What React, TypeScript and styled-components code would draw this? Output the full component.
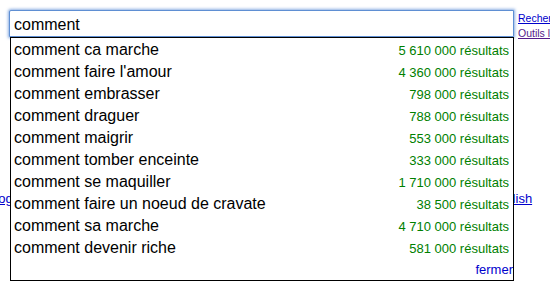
import styled, { createGlobalStyle } from 'styled-components';

const GlobalStyle = createGlobalStyle`
  html, body {
    margin: 0;
    padding: 0;
    background: #ffffff;
    overflow: hidden;
  }
  body {
    font-family: "Liberation Sans", Arial, sans-serif;
  }
`;

const suggestions = [
  { text: 'comment ca marche', count: '5 610 000 résultats' },
  { text: "comment faire l'amour", count: '4 360 000 résultats' },
  { text: 'comment embrasser', count: '798 000 résultats' },
  { text: 'comment draguer', count: '788 000 résultats' },
  { text: 'comment maigrir', count: '553 000 résultats' },
  { text: 'comment tomber enceinte', count: '333 000 résultats' },
  { text: 'comment se maquiller', count: '1 710 000 résultats' },
  { text: 'comment faire un noeud de cravate', count: '38 500 résultats' },
  { text: 'comment sa marche', count: '4 710 000 résultats' },
  { text: 'comment devenir riche', count: '581 000 résultats' },
];

export default function App() {
  return (
    <Page>
      <GlobalStyle />
      <TopBar>
        <SearchColumn>
          <SearchInput>comment</SearchInput>
          <Dropdown>
            {suggestions.map((s) => (
              <Row key={s.text}>
                <Query>{s.text}</Query>
                <Count>{s.count}</Count>
              </Row>
            ))}
            <Footer>
              <CloseLink>fermer</CloseLink>
            </Footer>
          </Dropdown>
        </SearchColumn>
        <SideLinks>
          <SmallLink>Recherche avancée</SmallLink>
          <SmallLink $visited>Outils linguistiques</SmallLink>
        </SideLinks>
      </TopBar>
      <LanguageRow>
        <LeftLink>Google.fr</LeftLink>
        <RightLink>English</RightLink>
      </LanguageRow>
    </Page>
  );
}

const Page = styled.div`
  width: 550px;
  height: 301px;
  padding: 10px 0 0 9px;
  box-sizing: border-box;
  overflow: hidden;
`;

const TopBar = styled.div`
  display: flex;
  align-items: flex-start;
`;

const SearchColumn = styled.div`
  position: relative;
  width: 505px;
  flex-shrink: 0;
  z-index: 2;
`;

const SearchInput = styled.div`
  box-sizing: border-box;
  height: 27px;
  border: 1px solid #5f8fd3;
  border-radius: 2px 0 0 0;
  box-shadow: 0 0 3px 1px rgba(90, 140, 215, 0.7);
  padding: 4px 0 0 4px;
  font-size: 16px;
  line-height: 20px;
  color: #000;
  background: #fff;
`;

const Dropdown = styled.div`
  position: absolute;
  top: 27px;
  left: 1px;
  width: 504px;
  box-sizing: border-box;
  border: 1px solid #000;
  padding-top: 1px;
  background: #fff;
  display: flex;
  flex-direction: column;
`;

const Row = styled.div`
  display: flex;
  justify-content: space-between;
  align-items: center;
  height: 22px;
  padding: 0 4px 0 3px;
`;

const Query = styled.span`
  font-size: 16px;
  color: #000;
  white-space: nowrap;
`;

const Count = styled.span`
  font-size: 13px;
  color: #008000;
  white-space: nowrap;
`;

const Footer = styled.div`
  display: flex;
  justify-content: flex-end;
  align-items: center;
  height: 21px;
`;

const CloseLink = styled.span`
  font-size: 13px;
  color: #0000cc;
`;

const SideLinks = styled.div`
  display: flex;
  flex-direction: column;
  gap: 3px;
  margin-left: 4px;
  margin-top: 2px;
  white-space: nowrap;
`;

const SmallLink = styled.a<{ $visited?: boolean }>`
  font-size: 10.5px;
  line-height: 12px;
  color: ${(p) => (p.$visited ? '#551a8b' : '#0000cc')};
  text-decoration: underline;
`;

const LanguageRow = styled.div`
  display: flex;
  margin-top: 152px;
  margin-left: -9px;
  font-size: 13px;
  white-space: nowrap;
`;

const LeftLink = styled.a`
  margin-left: -19px;
  color: #0000cc;
  text-decoration: underline;
`;

const RightLink = styled.a`
  margin-left: 455px;
  color: #0000cc;
  text-decoration: underline;
`;
